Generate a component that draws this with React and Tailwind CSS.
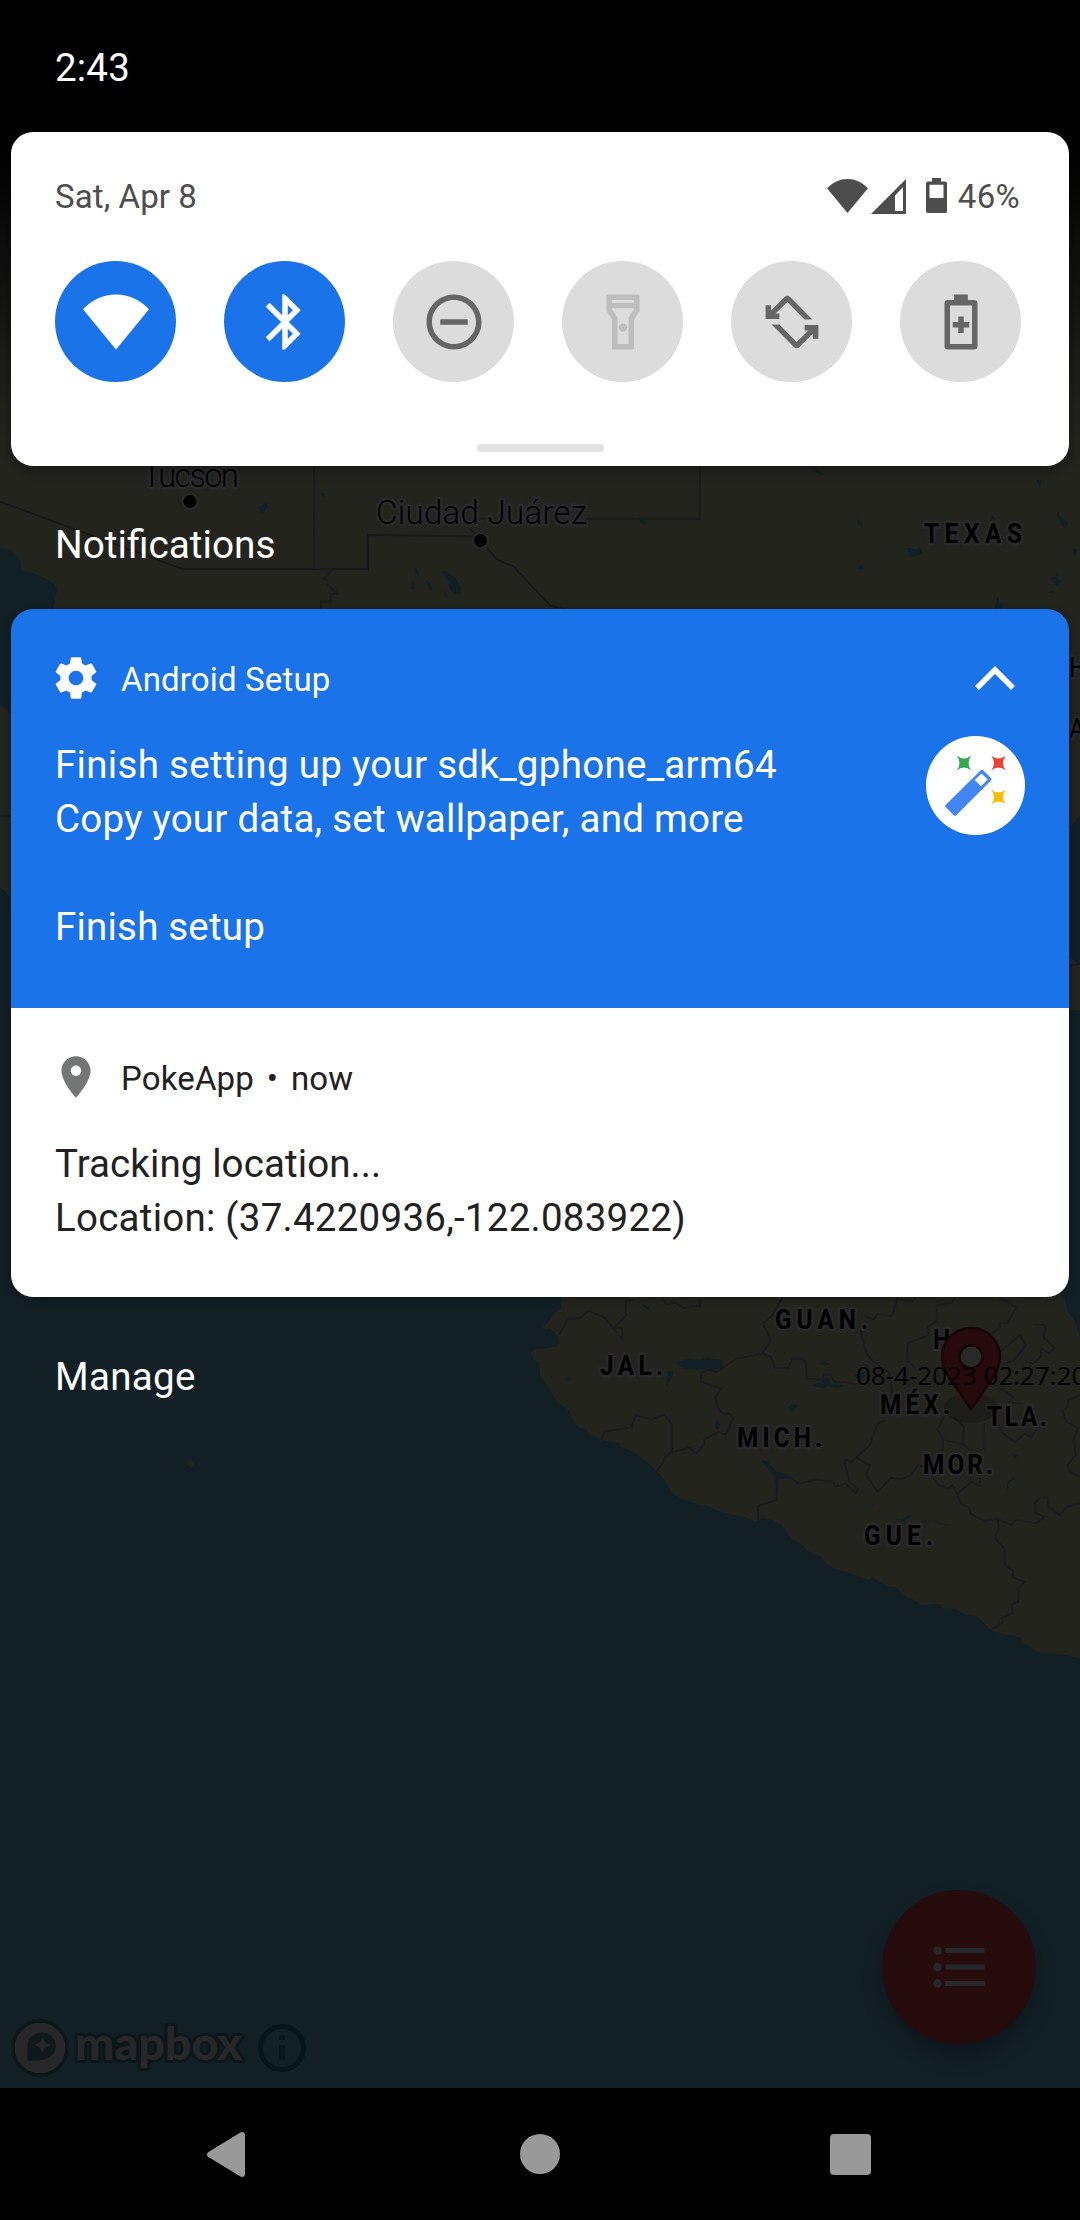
import React from 'react';

const coast =
  'M165 40L165 88L148 98L130 125L115 143L122 149L133 147L146 153L148 163L160 170L161 190L150 200L110 207L95 208L83 220L90 238L106 250L108 288L125 315L155 365L188 392L192 410L212 442L236 450L240 462L272 478L300 486L322 488L325 500L370 522L420 568L452 610L468 645L520 668L558 677L595 695L665 713L698 729L706 714L735 720L762 735L790 778L822 798L826 810L870 832L892 860L1000 900L1004 890L1045 918L1072 922L1090 946L1135 975L1185 972L1200 986L1230 988L1262 1006L1288 1008L1328 1052L1408 1074L1410 1085L1460 1120L1530 1125L1568 1136L1580 1136L1580 190L1568 175L1552 118L1535 95L1520 40Z';

const stateLines = [
  'M160 165L184 118L214 115L240 93L282 112L332 180L330 145L308 142L340 108V62L360 58',
  'M435 50L450 73L475 68L495 86L518 78L541 80V50',
  'M765 50L735 108L710 130L732 180L708 222L640 235L585 276L560 270L544 280V306L598 326L583 350L588 380L600 400L622 402L630 415L610 464L590 456L550 480L552 493L530 521L514 503L464 516V432L444 404L410 418L366 406L356 442L284 455L272 478',
  'M464 516L442 536V545L425 572',
  'M708 222L732 230L744 264H780L790 236L820 238L828 250V296L872 298L874 284H892L906 308L930 306L962 312',
  'M975 150L990 222L1012 246L1052 278L1060 330L1050 360M985 110L1010 118L1020 102L1060 108L1074 56L1112 64L1125 50',
  'M1230 50L1222 68L1180 75V125L1155 140L1158 166L1102 190L1100 238L1120 262',
  'M1350 55L1370 65L1395 82L1372 130L1350 127L1350 145L1325 165',
  'M1345 222L1405 165L1422 194L1390 240L1362 252M1442 132L1474 136L1470 172L1498 204L1484 220L1462 205V230L1440 252L1420 245',
  'M1365 305L1360 330L1385 350L1375 365L1410 372M1345 430L1352 455L1392 486L1418 462L1436 472L1450 446L1470 440',
  'M1568 345L1535 360L1536 380L1520 392L1530 425L1562 445L1550 480L1556 525L1534 555L1538 575L1568 590',
  'M1040 420L1020 432L1000 496L962 532L998 556L990 584L1020 636L1058 593L1085 598L1110 585L1130 555L1150 560L1185 615L1212 626L1222 615L1236 642L1245 672L1268 682L1270 700L1310 724L1345 716L1348 738L1338 775L1364 806L1366 858L1386 872V892L1418 906L1402 924L1400 966L1382 972L1386 1000L1355 1014L1360 1026L1325 1052',
  'M962 532L950 548L935 538L932 550L944 605L968 628L962 640L935 612L906 620L900 604L850 600L810 612L780 590L748 596V660L697 678L698 728',
  'M1200 410L1183 450L1198 480L1250 492L1254 440L1225 410M1198 480L1195 520M1308 430V505L1280 518L1250 492M1345 716L1382 736L1396 720L1450 730L1472 710L1446 698V668L1460 652H1480L1482 680L1512 706L1535 680L1568 670M1236 642L1275 605L1298 620V590',
];

const lakes = [
  'M476 250L500 238L540 240L560 234L602 240L600 262L580 272L545 268L500 266Z',
  'M456 272L468 276L462 300L448 320L450 298Z',
  'M862 250L880 244L892 252L878 257Z',
  'M842 316L870 305L872 290L890 296L892 312L930 316L912 326L888 318L870 325Z',
  'M778 382L790 372L804 376L788 398Z',
  'M580 436L590 420L596 440L586 450Z',
  'M176 296L186 292L196 298L184 306Z',
  'M705 540L722 545L748 575L790 588L780 596L752 594L750 640L745 625L742 590Z',
  'M1166 718L1190 730L1224 737L1190 734Z',
  'M1080 720L1092 716L1110 703L1116 712L1098 718L1090 728Z',
  'M1384 518L1392 526L1404 524L1390 534Z',
  'M1098 955L1112 955L1138 975L1120 968Z',
  'M366 62L390 75L404 82L400 90L385 75Z',
  'M1342 330L1362 322L1352 335Z',
  'M955 285L985 275L990 290L970 298Z',
];

// Map captions are narrowed horizontally, then letter-spaced to width w.
function MapLabel({ x, y, w, size = 27, weight = 700, squeeze = 0.9, children }) {
  return (
    <text
      transform={`translate(${x} ${y}) scale(${squeeze} 1)`}
      textLength={w / squeeze}
      fontSize={size}
      fontWeight={weight}
      fontFamily="Roboto, sans-serif"
      fill="#000"
      stroke="#29292b"
      strokeWidth="5"
      strokeLinejoin="round"
      paintOrder="stroke"
    >
      {children}
    </text>
  );
}

function MapBackdrop() {
  return (
    <svg className="absolute inset-0" width="1080" height="2088" viewBox="0 0 1080 2088">
      <defs>
        <linearGradient id="topShade" x1="0" y1="0" x2="0" y2="1">
          <stop offset="0" stopColor="#000" />
          <stop offset="0.3" stopColor="#000" />
          <stop offset="1" stopColor="#000" stopOpacity="0" />
        </linearGradient>
      </defs>
      <rect width="1080" height="2088" fill="#121f24" />
      <path d="M0 0H1080V826L1066 830L1060 950L1080 965V1010H1062V1300H560V1000H12V905Q10 892 0 888V705L12 715L53 610L57 590Q54 578 21 570V566Q20 550 0 548Z" fill="#24241f" />
      <path d="M1057 830L1072 825L1080 815V950L1064 945L1057 1000Z" fill="#121f24" />
      <g transform="translate(0 460) scale(0.3444 0.3333)" fill="none" stroke="#18181b">
        <g strokeWidth="5.5">
          <path d="M0 125L530 327H1069V225L1375 229M1415 265L1442 298L1492 320L1568 405L1600 438L1640 448" />
          <path d="M912 0V325L965 330L938 355L950 360V372L982 402H960V424H932V460M1395 176H1440M1700 177H2032V0M1362 205L1385 225" stroke="#1c1c20" />
        </g>
        <g fill="#121f24" stroke="none">
          <path d="M746 142L760 138L772 128L778 140L762 161Z" />
          <path d="M936 98L947 102L940 112L933 108Z" />
          <path d="M1205 322L1216 332L1214 348L1207 340ZM1192 388L1200 366L1205 388ZM1236 362L1250 370L1254 390L1244 388ZM1280 334L1292 332L1320 352L1338 378V402H1318L1302 378L1308 366ZM1287 386L1300 410L1296 416Z" />
          <path d="M1856 170L1878 188L1872 200L1858 186Z" />
          <path d="M2363 30L2375 30L2394 47L2380 42Z" />
          <path d="M2487 178L2500 182L2506 204L2490 194ZM2488 328L2498 312L2510 328ZM2635 264L2660 268L2668 262L2680 278L2660 288L2642 292Z" />
          <path d="M3008 60L3024 62L3020 82ZM3070 152L3078 168L3102 188L3094 208L3080 192L3070 170ZM3110 264L3126 268L3122 290ZM3046 356L3062 350L3074 338L3072 358L3084 364L3070 378ZM3040 398L3056 394L3066 402ZM2888 448L2896 410L2904 430L2916 436L2904 448ZM2880 165L2890 178H2878Z" />
        </g>
      </g>
      <path d="M0 816H11" stroke="#1a1a1e" strokeWidth="2" />
      <path d="M1069 966L1080 964" stroke="#1a1a1e" strokeWidth="2" />
      <g transform="translate(500 1280) scale(0.37 0.3333)">
        <path d="M60 20H1580V300H60Z" fill="#121f24" />
        <path d={coast} fill="#24241f" />
        <g fill="none" stroke="#1b1b20" strokeWidth="5" strokeLinejoin="round">
          {stateLines.map((d) => (
            <path key={d} d={d} />
          ))}
        </g>
        <g fill="#121f24">
          {lakes.map((d) => (
            <path key={d} d={d} />
          ))}
        </g>
        <path d="M1372 628V610L1390 592M985 676H1014" stroke="#121f24" strokeWidth="3" fill="none" />
      </g>
      <path d="M190 1459L194 1464L191 1468L187 1464Z" fill="#24241f" />
      <circle cx="190" cy="501.5" r="6.5" stroke="#29292b" strokeWidth="4" paintOrder="stroke" />
      <circle cx="480.5" cy="540.5" r="6.5" stroke="#29292b" strokeWidth="4" paintOrder="stroke" />
      <MapLabel x={142} y={486.5} w={97} size={33} weight={300} squeeze={1}>Tucson</MapLabel>
      <MapLabel x={376} y={524} w={211} size={33} weight={300} squeeze={1}>Ciudad Juárez</MapLabel>
      <MapLabel x={924} y={542.5} w={98}>TEXAS</MapLabel>
      <MapLabel x={1069} y={677} w={18} weight={400}>H</MapLabel>
      <MapLabel x={1069} y={738} w={18} weight={400}>A</MapLabel>
      <MapLabel x={775} y={1328.5} w={93}>GUAN.</MapLabel>
      <MapLabel x={600} y={1375} w={63}>JAL.</MapLabel>
      <MapLabel x={737} y={1446.5} w={85}>MICH.</MapLabel>
      <MapLabel x={933} y={1349} w={17}>H</MapLabel>
      <MapLabel x={880} y={1414} w={70}>MÉX.</MapLabel>
      <MapLabel x={987} y={1426} w={60}>TLA.</MapLabel>
      <MapLabel x={923} y={1474} w={70}>MOR.</MapLabel>
      <MapLabel x={864} y={1545} w={69}>GUE.</MapLabel>
      <ellipse cx="971" cy="1408" rx="27" ry="15" fill="#000" opacity="0.2" />
      <path
        d="M971 1409L950 1379C944 1370 942 1364 942 1357A29 29 0 1 1 1000 1357C1000 1364 998 1370 992 1379Z"
        fill="#270a0d"
        stroke="#190405"
        strokeWidth="2.5"
      />
      <circle cx="971" cy="1356.7" r="11.5" fill="#29292a" stroke="#190405" strokeWidth="2.5" />
      <text x="856" y="1384.5" fontSize="26" fontFamily="'Open Sans', sans-serif" fill="#000">08-4-2023 02:27:20</text>
      <rect width="1080" height="440" fill="url(#topShade)" />
    </svg>
  );
}

function MapAttribution() {
  return (
    <svg className="absolute left-0 top-[2010px]" width="320" height="76" viewBox="0 2010 320 76">
      <circle cx="40" cy="2048" r="27" fill="#272729" stroke="#0c171a" strokeWidth="3.5" />
      <path d="M27.5 2060.500V2046C27.500 2038 34 2032.500 42 2032.500A14 14 0 0 1 56 2046C56 2056 46 2060.500 36 2060.500Z" fill="#0f191c" />
      <path d="M42.500 2037L45 2042.500L50.500 2045L45 2047.500L42.500 2053L40 2047.500L34.500 2045L40 2042.500Z" fill="#272729" />
      <text
        x="75"
        y="2059.5"
        textLength="167"
        lengthAdjust="spacingAndGlyphs"
        fontSize="45"
        fontWeight="900"
        fontFamily="Lato, sans-serif"
        fill="#272729"
        stroke="#0c171a"
        strokeWidth="6"
        strokeLinejoin="round"
        paintOrder="stroke"
      >
        mapbox
      </text>
      <circle cx="282" cy="2048" r="21.500" fill="none" stroke="#05161b" strokeWidth="5" />
      <path d="M279 2035.500H285V2040H279ZM279 2045.500H285V2060H279Z" fill="#07171c" />
    </svg>
  );
}

function ListButton() {
  return (
    <div className="absolute left-[882px] top-[1890px] flex h-[154px] w-[154px] items-center justify-center rounded-full bg-[#260c0c] shadow-[0_12px_20px_rgba(0,0,0,0.25)]">
      <svg width="52" height="42" viewBox="0 0 52 42" fill="#272829">
        <circle cx="4.500" cy="4.500" r="4.200" />
        <circle cx="4.500" cy="21" r="4.200" />
        <circle cx="4.500" cy="37.500" r="4.200" />
        <path d="M12.500 2H51.500V7H12.500ZM12.500 18.500H51.500V23.500H12.500ZM12.500 35H51.500V40H12.500Z" />
      </svg>
    </div>
  );
}

const WIFI = 'M12 22L0 7.400A16.040 16.040 0 0 1 24 7.400Z';

const tiles = [
  { name: 'Wi-Fi', on: true, d: WIFI },
  {
    name: 'Bluetooth',
    on: true,
    d: 'M17.71 7.71L12 2h-1v7.590L6.410 5 5 6.410 10.590 12 5 17.590 6.410 19 11 14.410V22h1l5.710-5.710-4.300-4.290 4.300-4.290zM13 5.830l1.880 1.880L13 9.590V5.830zm1.880 10.460L13 18.170v-3.760l1.880 1.880z',
  },
  {
    name: 'Do not disturb',
    d: 'M7 11v2h10v-2H7zm5-9C6.480 2 2 6.480 2 12s4.480 10 10 10 10-4.480 10-10S17.520 2 12 2zm0 18c-4.410 0-8-3.590-8-8s3.590-8 8-8 8 3.590 8 8-3.590 8-8 8z',
  },
  {
    name: 'Flashlight',
    dim: true,
    d: 'M18 2H6v6l2 3v11h8V11l2-3V2zM16 4v1H8V4h8zM14 10.400V20h-4v-9.600L8 7.400V7h8v.4L14 10.400zM12 12.500a1.500 1.500 0 1 0 0 3a1.500 1.500 0 1 0 0-3z',
  },
  {
    name: 'Auto-rotate',
    d: 'M2.400 5.900h2v1.900L9.300 2.900Q10.300 2 11.300 2.900L19.400 11.100H16.600L10.300 4.700L6 8.900H7.400v2h-5zM21.600 18.100h-2v-1.900L14.700 21.100Q13.700 22 12.700 21.100L4.600 12.900H7.400L13.700 19.300L18 15.100H16.600v-2h5z',
  },
  {
    name: 'Battery saver',
    d: 'M9.500 2h5v2h2.300A1.200 1.200 0 0 1 18 5.200V20.800A1.200 1.200 0 0 1 16.800 22H7.200A1.200 1.200 0 0 1 6 20.800V5.200A1.200 1.200 0 0 1 7.200 4H9.500zM8 6V20H16V6zM11 10h2v2h2v2h-2v2h-2v-2H9v-2h2z',
  },
];

function tileClass(t) {
  if (t.on) return 'bg-[#1a73e8] text-white';
  if (t.dim) return 'bg-[#dcdcdc] text-[#bdbdbd]';
  return 'bg-[#dcdcdc] text-[#666666]';
}

function QuickSettings() {
  return (
    <section className="mx-[11px] mt-[33px] flex h-[334px] flex-col rounded-[22px] bg-white px-11 pt-[43px] shadow-[0_4px_12px_rgba(0,0,0,0.35)]">
      <div className="flex h-11 items-center justify-between text-[33px] leading-[44px] text-[#4d4d4d]">
        <span className="tracking-[0.1px]">Sat, Apr 8</span>
        <div className="flex items-center pr-[5px]">
          <svg className="-mt-0.5" width="41" height="34" viewBox="0 2 24 20" preserveAspectRatio="none" fill="currentColor">
            <path d={WIFI} />
          </svg>
          <svg className="-mt-0.5 ml-[3px]" width="35" height="35" viewBox="0 0 35 35" fill="currentColor" fillRule="evenodd">
            <path d="M35 0V35H0ZM32 8L24 16.500V32H32Z" />
          </svg>
          <svg className="-mt-1 ml-5" width="21" height="35" viewBox="0 0 21 36" preserveAspectRatio="none" fill="currentColor" fillRule="evenodd">
            <path d="M6 0H15V3.500H19A2 2 0 0 1 21 5.500V34A2 2 0 0 1 19 36H2A2 2 0 0 1 0 34V5.500A2 2 0 0 1 2 3.500H6ZM3.500 7V20.500H17.500V7Z" />
          </svg>
          <span className="ml-[11px] tracking-[0.3px]">46%</span>
        </div>
      </div>
      <div className="mt-[42px] flex gap-12">
        {tiles.map((t) => (
          <button key={t.name} aria-label={t.name} className={'flex h-[121px] w-[121px] items-center justify-center rounded-full ' + tileClass(t)}>
            <svg width="66" height="66" viewBox="0 0 24 24" fill="currentColor" fillRule="evenodd">
              <path d={t.d} />
            </svg>
          </button>
        ))}
      </div>
      <div className="mx-auto mt-[62px] h-2 w-[127px] rounded-full bg-[#e3e3e3]" />
    </section>
  );
}

function WandIcon() {
  const star = 'M-7.2 -7.2Q0 -1.8 7.2 -7.2Q1.8 0 7.2 7.2Q0 1.8 -7.2 7.2Q-1.8 0 -7.2 -7.2Z';
  return (
    <svg width="99" height="99" viewBox="0 0 99 99">
      <circle cx="49.500" cy="49.500" r="49.500" fill="#fff" />
      <path d={star} transform="translate(38 27)" fill="#34a853" />
      <path d={star} transform="translate(72.500 27)" fill="#ea4335" />
      <path d={star} transform="translate(72.500 61)" fill="#fbbc04" />
      <path d="M56 35.500L63.700 43.200L29 77.900L21 69.900Z" fill="#4285f4" stroke="#4285f4" strokeWidth="3.500" strokeLinejoin="round" />
      <path d="M55.500 37.500L61.700 43.600L55 50.200L48.700 44Z" fill="#fff" />
    </svg>
  );
}

function SetupNotification() {
  return (
    <article className="flex h-[399px] flex-col bg-[#1a73e8] px-11 pt-[49px] text-white">
      <header className="flex h-11 items-center">
        <svg className="-mt-1 -ml-1" width="50" height="50" viewBox="0 0 24 24" fill="currentColor">
          <path d="M19.430 12.980c.04-.32.07-.64.07-.98s-.03-.66-.07-.98l2.110-1.650c.19-.15.24-.42.12-.64l-2-3.460c-.12-.22-.39-.3-.61-.22l-2.490 1c-.52-.4-1.080-.73-1.690-.98l-.38-2.650C14.460 2.180 14.250 2 14 2h-4c-.25 0-.46.18-.49.42l-.38 2.650c-.61.25-1.170.59-1.690.98l-2.490-1c-.23-.09-.49 0-.61.22l-2 3.460c-.13.22-.07.49.12.64l2.110 1.650c-.04.32-.07.65-.07.98s.03.66.07.98l-2.110 1.650c-.19.15-.24.42-.12.64l2 3.460c.12.22.39.3.61.22l2.490-1c.52.4 1.080.73 1.690.98l.38 2.650c.03.24.24.42.49.42h4c.25 0 .46-.18.49-.42l.38-2.650c.61-.25 1.170-.59 1.690-.98l2.490 1c.23.09.49 0 .61-.22l2-3.460c.12-.22.07-.49-.12-.64l-2.110-1.650zM12 15.500c-1.930 0-3.500-1.570-3.500-3.500s1.570-3.500 3.500-3.500 3.500 1.570 3.500 3.500-1.570 3.500-3.500 3.500z" />
        </svg>
        <span className="ml-5 text-[33px] leading-[44px] tracking-[0.15px]">Android Setup</span>
        <svg className="-mt-1 mr-2.5 ml-auto" width="40" height="26" viewBox="0 0 40 26" fill="none" stroke="currentColor" strokeWidth="5.500">
          <path d="M2 23L20 5L38 23" />
        </svg>
      </header>
      <div className="mt-9 flex justify-between text-[38.5px] leading-[54px]">
        <div>
          <p className="tracking-[0.3px]">Finish setting up your sdk_gphone_arm64</p>
          <p className="tracking-[0.25px]">Copy your data, set wallpaper, and more</p>
        </div>
        <div className="-mt-0.5">
          <WandIcon />
        </div>
      </div>
      <p className="mt-[54px] text-[38.5px] leading-[54px] tracking-[0.2px]">Finish setup</p>
    </article>
  );
}

function PokeNotification() {
  return (
    <article className="flex h-[289px] flex-col bg-white px-11 pt-[49px] text-[#212121]">
      <header className="flex h-11 items-center text-[33px] leading-[44px] tracking-[0.15px]">
        <svg className="-mt-1 -ml-1 text-[#737577]" width="50" height="50" viewBox="0 0 24 24" fill="currentColor">
          <path d="M12 2C8.130 2 5 5.130 5 9c0 5.250 7 13 7 13s7-7.750 7-13c0-3.870-3.130-7-7-7zm0 9.500c-1.380 0-2.500-1.120-2.500-2.500s1.120-2.500 2.500-2.500 2.500 1.120 2.500 2.500-1.120 2.500-2.500 2.500z" />
        </svg>
        <span className="ml-5">PokeApp</span>
        <span className="w-[37px] text-center">•</span>
        <span>now</span>
      </header>
      <div className="mt-9 text-[38.5px] leading-[54px]">
        <p className="tracking-[0.1px]">Tracking location...</p>
        <p className="tracking-[0.25px]">Location: (37.4220936,-122.083922)</p>
      </div>
    </article>
  );
}

function NavigationBar() {
  return (
    <nav className="mt-auto flex h-[132px] items-center bg-black pl-[205px] text-[#999999]">
      <svg width="41" height="46" viewBox="0 0 41 46" fill="currentColor" stroke="currentColor" strokeWidth="6" strokeLinejoin="round">
        <path d="M5 23.500L37 4V43Z" />
      </svg>
      <div className="ml-[274px] h-10 w-10 rounded-full bg-current" />
      <div className="ml-[270px] h-[41px] w-[41px] rounded-[4px] bg-current" />
    </nav>
  );
}

export default function App() {
  return (
    <div className="relative h-[2220px] w-[1080px] overflow-hidden bg-black font-[Roboto,sans-serif]">
      <MapBackdrop />
      <MapAttribution />
      <ListButton />
      <div className="relative flex h-full flex-col text-white">
        <div className="flex h-[99px] items-end px-[55px] pb-1 text-[38.5px] leading-[54px] tracking-[0.2px]">2:43</div>
        <QuickSettings />
        <h2 className="mt-[52px] px-[55px] text-[38.8px] leading-[54px]">Notifications</h2>
        <div className="mx-[11px] mt-[37px] overflow-hidden rounded-[22px] shadow-[0_2px_8px_rgba(0,0,0,0.3)]">
          <SetupNotification />
          <PokeNotification />
        </div>
        <p className="mt-[53px] px-[55px] text-[38.5px] leading-[54px] tracking-[0.3px]">Manage</p>
        <NavigationBar />
      </div>
    </div>
  );
}
